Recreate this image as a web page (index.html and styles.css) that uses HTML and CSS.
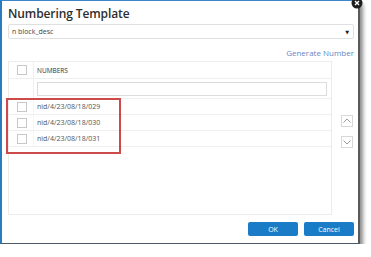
FILE: index.html
```html
<!DOCTYPE html>
<html>
<head>
<meta charset="utf-8">
<link rel="stylesheet" href="styles.css">
</head>
<body>
<div class="dialog">
  <div class="close">
    <svg width="12" height="12" viewBox="0 0 12 12"><circle cx="6" cy="6" r="5.5" fill="#1e1e1e"/><path d="M4 4 L8 8 M8 4 L4 8" stroke="#fff" stroke-width="1.4"/></svg>
  </div>
  <div class="title">Numbering Template</div>
  <div class="select">
    <span class="select-text">n block_desc</span>
    <span class="select-arrow">▼</span>
  </div>
  <div class="link-row"><span class="link">Generate Number</span></div>
  <div class="body-row">
    <div class="panel">
      <div class="row head">
        <div class="cb-col"><span class="cb"></span></div>
        <div class="txt-col">NUMBERS</div>
      </div>
      <div class="row filter">
        <div class="cb-col"></div>
        <div class="txt-col"><span class="filter-input"></span></div>
      </div>
      <div class="row data">
        <div class="cb-col"><span class="cb"></span></div>
        <div class="txt-col">nid/4/23/08/18/029</div>
      </div>
      <div class="row data">
        <div class="cb-col"><span class="cb"></span></div>
        <div class="txt-col">nid/4/23/08/18/030</div>
      </div>
      <div class="row data">
        <div class="cb-col"><span class="cb"></span></div>
        <div class="txt-col">nid/4/23/08/18/031</div>
      </div>
    </div>
    <div class="side">
      <span class="arrow-btn">
        <svg width="10" height="10" viewBox="0 0 10 10"><path d="M1.5 6.5 L5 3 L8.5 6.5" fill="none" stroke="#9a9a9a" stroke-width="1"/></svg>
      </span>
      <span class="arrow-btn">
        <svg width="10" height="10" viewBox="0 0 10 10"><path d="M1.5 3.5 L5 7 L8.5 3.5" fill="none" stroke="#9a9a9a" stroke-width="1"/></svg>
      </span>
    </div>
  </div>
  <div class="footer">
    <span class="btn">OK</span>
    <span class="btn">Cancel</span>
  </div>
  <div class="highlight"></div>
</div>
</body>
</html>
```

FILE: styles.css
```css
html, body {
  margin: 0;
  padding: 0;
  background: #ffffff;
}
body {
  font-family: "Open Sans", "DejaVu Sans", sans-serif;
  color: #333;
}
.dialog {
  position: relative;
  width: 346px;
  height: 236px;
  background: #fff;
  border-left: 2px solid #2a7cc0;
  border-top: 1px solid #3a86c6;
  border-right: 2px solid #5a5a5a;
  border-bottom: 1px solid #4a5a6a;
  padding: 0 4px 6px 6px;
  box-shadow: 3px 4px 4px rgba(0, 0, 0, 0.45);
}
.close {
  position: absolute;
  right: -5px;
  top: -4px;
  width: 12px;
  height: 12px;
  display: flex;
}
.title {
  padding-top: 4px;
  font-size: 12px;
  line-height: 18px;
  color: #2e2e2e;
  font-weight: 600;
  letter-spacing: -0.1px;
}
.select {
  margin-top: 1px;
  height: 13px;
  border: 1px solid #e0e0e0;
  border-radius: 2px;
  display: flex;
  align-items: center;
  justify-content: space-between;
  padding: 0 4px 0 3px;
}
.select-text {
  font-size: 7px;
  color: #444;
}
.select-arrow {
  font-size: 5px;
  color: #222;
}
.link-row {
  margin-top: 6px;
  height: 14px;
  display: flex;
  align-items: center;
  justify-content: flex-end;
}
.link {
  font-size: 8px;
  color: #6687c2;
}
.body-row {
  margin-top: 2px;
  display: flex;
}
.panel {
  width: 322px;
  height: 152px;
  border: 1px solid #ececec;
}
.row {
  display: flex;
  border-bottom: 1px solid #efefef;
}
.row.head { height: 16px; }
.row.filter { height: 19px; }
.row.data { height: 15px; }
.cb-col {
  width: 25px;
  border-right: 1px solid #f0f0f0;
  display: flex;
  align-items: center;
  padding-left: 8px;
  box-sizing: border-box;
}
.row.data .cb-col { border-right-color: #f6f6f6; }
.cb {
  width: 8px;
  height: 8px;
  border: 1px solid #c8c8c8;
  background: #fff;
}
.txt-col {
  flex: 1;
  display: flex;
  align-items: center;
  padding-left: 3px;
  font-size: 7px;
  color: #555;
}
.row.head .txt-col { font-size: 6.5px; color: #333; }
.filter-input {
  width: 288px;
  height: 12px;
  border: 1px solid #dcdcdc;
}
.side {
  width: 20px;
  padding-top: 54px;
  display: flex;
  flex-direction: column;
  align-items: flex-end;
  gap: 9px;
}
.arrow-btn {
  width: 10px;
  height: 10px;
  border: 1px solid #d8d8d8;
  display: flex;
  margin-right: -1px;
}
.footer {
  margin-top: 7px;
  display: flex;
  justify-content: flex-end;
  gap: 6px;
}
.btn {
  width: 50px;
  height: 14px;
  background: #1a7cc7;
  border-radius: 2px;
  color: #fff;
  font-size: 7px;
  display: flex;
  align-items: center;
  justify-content: center;
}
.highlight {
  position: absolute;
  left: 4px;
  top: 97px;
  width: 111px;
  height: 52px;
  border: 2px solid #cc4a4a;
}
```
